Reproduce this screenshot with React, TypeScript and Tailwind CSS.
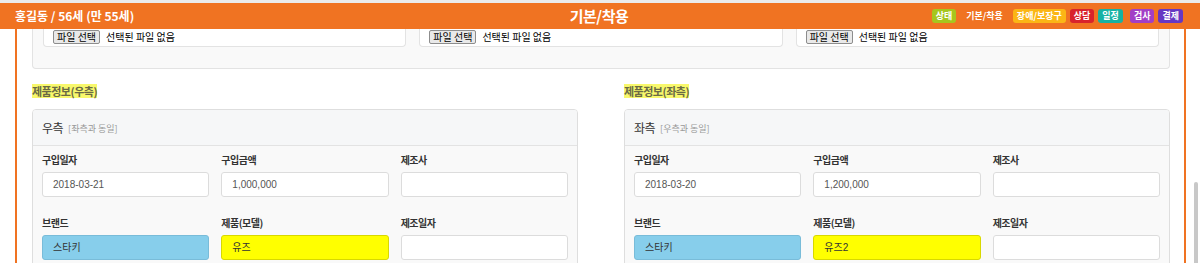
import React from "react";

function FileBox() {
  return (
    <div className="flex h-[18px] items-start rounded-b-[4px] border border-t-0 border-[#e3e3e3] bg-white pl-[9px] pt-[1px]">
      <span className="flex h-[14px] items-center rounded-[2px] border border-[#8d8d8d] bg-[#e9e9e9] px-[3px] text-[10px] leading-[12px] text-black">
        파일 선택
      </span>
      <span className="ml-[6px] text-[10px] leading-[14px] text-black">선택된 파일 없음</span>
    </div>
  );
}

type Field = { label: string; value?: string; tone?: "blue" | "yellow" };

function Input({ f }: { f: Field }) {
  const tone =
    f.tone === "blue"
      ? "bg-[#87ceeb] border-[#79bcd9] text-[#333]"
      : f.tone === "yellow"
      ? "bg-[#ffff00] border-[#d8d800] text-[#333]"
      : "bg-white border-[#dcdcdc] text-[#555]";
  return (
    <div>
      <div className="h-[14px] text-[10px] font-bold leading-[14px] tracking-[-0.5px] text-[#333]">{f.label}</div>
      <div
        className={`mt-[5px] flex h-[25px] items-center rounded-[3px] border pl-[10px] font-['Liberation_Sans','Noto_Sans_CJK_KR',sans-serif] text-[10px] ${tone}`}
      >
        {f.value}
      </div>
    </div>
  );
}

function Section({
  title,
  side,
  note,
  date,
  price,
  model,
}: {
  title: string;
  side: string;
  note: string;
  date: string;
  price: string;
  model: string;
}) {
  const row1: Field[] = [
    { label: "구입일자", value: date },
    { label: "구입금액", value: price },
    { label: "제조사" },
  ];
  const row2: Field[] = [
    { label: "브랜드", value: "스타키", tone: "blue" },
    { label: "제품(모델)", value: model, tone: "yellow" },
    { label: "제조일자" },
  ];
  return (
    <div>
      <div className="h-[14px] w-fit bg-[#f8f86c] text-[11px] font-bold leading-[14px] tracking-[-0.5px] text-[#6a6a45]">
        {title}
      </div>
      <div className="mt-[11px] overflow-hidden rounded-[4px] border border-[#dedede]">
        <div className="flex h-[36px] items-center gap-[5px] border-b border-[#e3e3e3] bg-[#f6f7f8] pl-[9px]">
          <span className="text-[12px] leading-[14px] tracking-[-0.5px] text-[#333]">{side}</span>
          <span className="pt-[2px] text-[9px] leading-[12px] text-[#999]">{note}</span>
        </div>
        <div className="h-[120px] bg-[#f9f9f9] px-[9px] pt-[7px]">
          <div className="grid grid-cols-3 gap-x-[12px]">
            {row1.map((f) => (
              <Input key={f.label} f={f} />
            ))}
          </div>
          <div className="mt-[19px] grid grid-cols-3 gap-x-[12px]">
            {row2.map((f) => (
              <Input key={f.label} f={f} />
            ))}
          </div>
        </div>
      </div>
    </div>
  );
}

export default function App() {
  return (
    <div className="relative h-[263px] w-[1200px] overflow-hidden bg-white font-['Noto_Sans_CJK_KR',sans-serif] text-[#333]">
      <div className="h-[3px] bg-[#ebebeb]" />
      <header className="grid h-[26px] grid-cols-[1fr_auto_1fr] items-center bg-[#f07322] pl-[15px] pr-[17px] text-white">
        <div className="text-[12px] font-bold leading-[16px]">홍길동 / 56세 (만 55세)</div>
        <div className="text-[15px] font-bold leading-[18px] tracking-[-0.5px]">기본/착용</div>
        <div className="flex items-center justify-end gap-[4px] text-[9px] font-bold leading-[14px]">
          <span className="h-[14px] rounded-[3px] bg-[#a6c61d] px-[4px]">상태</span>
          <span className="h-[14px] px-[6px]">기본/착용</span>
          <span className="h-[14px] rounded-[3px] bg-[#fbb615] px-[4px]">장애/보장구</span>
          <span className="h-[14px] rounded-[3px] bg-[#d8232c] px-[4px]">상담</span>
          <span className="h-[14px] rounded-[3px] bg-[#16b2a3] px-[4px]">일정</span>
          <span className="ml-[3px] h-[14px] rounded-[3px] bg-[#a23ec6] px-[4px]">검사</span>
          <span className="h-[14px] rounded-[3px] bg-[#6637c2] px-[4px]">결제</span>
        </div>
      </header>
      <div className="ml-[15px] h-[234px] w-[1171px] border-x-2 border-[#f07322] pl-[15px] pr-[14px]">
        <div className="rounded-b-[4px] border border-t-0 border-[#e3e3e3] bg-[#f9f9f9] px-[10px] pb-[21px]">
          <div className="grid grid-cols-3 gap-[13px]">
            <FileBox />
            <FileBox />
            <FileBox />
          </div>
        </div>
        <div className="mt-[15px] grid grid-cols-2 gap-[46px]">
          <Section
            title="제품정보(우측)"
            side="우측"
            note="[좌측과 동일]"
            date="2018-03-21"
            price="1,000,000"
            model="유즈"
          />
          <Section
            title="제품정보(좌측)"
            side="좌측"
            note="[우측과 동일]"
            date="2018-03-20"
            price="1,200,000"
            model="유즈2"
          />
        </div>
      </div>
      <div className="absolute right-[2px] top-[182px] h-[90px] w-[4px] rounded-full bg-[#c8c8c8]" />
    </div>
  );
}
